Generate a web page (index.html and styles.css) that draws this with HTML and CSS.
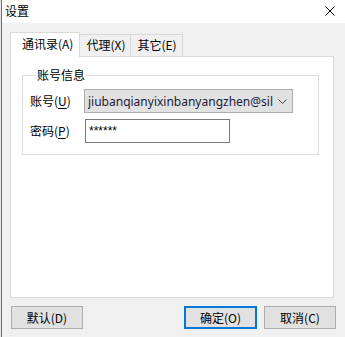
FILE: index.html
```html
<!DOCTYPE html>
<html lang="zh">
<head>
<meta charset="utf-8">
<title>设置</title>
<link rel="stylesheet" href="styles.css">
</head>
<body>
<div class="edge"></div>
<div class="window">
  <div class="titlebar">
    <span class="title">设置</span>
    <svg class="close" width="10" height="10" viewBox="0 0 10 10"><path d="M0.5 0.5L9.5 9.5M9.5 0.5L0.5 9.5" stroke="#000" stroke-width="1" fill="none"/></svg>
  </div>
  <div class="body">
    <div class="tabs">
      <div class="tab active">通讯录(<u>A</u>)</div>
      <div class="tab">代理(<u>X</u>)</div>
      <div class="tab">其它(<u>E</u>)</div>
    </div>
    <div class="panel">
      <fieldset class="group">
        <legend>账号信息</legend>
        <div class="row">
          <label class="lbl">账号(<u>U</u>)</label>
          <div class="combo">
            <span class="combo-text">jiubanqianyixinbanyangzhen@sil</span>
            <svg class="chev" width="9" height="5" viewBox="0 0 9 5"><path d="M0.5 0.5L4.5 4.5L8.5 0.5" stroke="#444" stroke-width="1" fill="none"/></svg>
          </div>
        </div>
        <div class="row">
          <label class="lbl">密码(<u>P</u>)</label>
          <div class="input">******</div>
        </div>
      </fieldset>
    </div>
    <div class="buttons">
      <button class="btn">默认(D)</button>
      <div class="spacer"></div>
      <button class="btn primary">确定(O)</button>
      <button class="btn">取消(C)</button>
    </div>
  </div>
</div>
</body>
</html>
```
FILE: styles.css
```css
html, body {
  margin: 0;
  padding: 0;
}
body {
  width: 345px;
  height: 337px;
  overflow: hidden;
  display: flex;
  background: #f0f0f0;
  font-family: "Noto Sans CJK SC", "Noto Sans", sans-serif;
  font-size: 12px;
  color: #000;
}
.edge {
  width: 1px;
  background: #e4e4e4;
}
.window {
  flex: 1;
  border-left: 1px solid #2f7fd6;
  display: flex;
  flex-direction: column;
}
.titlebar {
  height: 23px;
  background: #fff;
  display: flex;
  align-items: center;
  justify-content: space-between;
  padding: 0 10px 0 3px;
}
.title {
  font-size: 12px;
  line-height: 16px;
  margin-top: -1px;
}
.close {
  display: block;
  margin-top: -2px;
}
.body {
  padding: 9px 0 0 8px;
  display: flex;
  flex-direction: column;
}
.tabs {
  display: flex;
  align-items: flex-end;
  height: 24px;
  position: relative;
  z-index: 1;
}
.tab {
  height: 22px;
  box-sizing: border-box;
  border: 1px solid #d9d9d9;
  border-bottom: none;
  border-left: none;
  background: #f0f0f0;
  padding: 0 5px 0 6px;
  line-height: 20px;
  white-space: nowrap;
}
.tab u { text-decoration: none; }
.tab.active {
  height: 25px;
  margin-bottom: -1px;
  background: #fff;
  border-left: 1px solid #d9d9d9;
  padding: 0 6px 0 11px;
  line-height: 22px;
}
.panel {
  width: 324px;
  height: 242px;
  box-sizing: border-box;
  background: #fff;
  border: 1px solid #d9d9d9;
  padding: 10px 0 0 11px;
}
.group {
  margin: 0;
  width: 297px;
  box-sizing: border-box;
  border: 1px solid #dcdcdc;
  padding: 6px 0 11px 7px;
  min-width: 0;
  display: flex;
  flex-direction: column;
  gap: 6px;
}
.group legend {
  padding: 0 1px;
  margin-left: 6px;
  line-height: 16px;
}
.row {
  display: flex;
  align-items: center;
  height: 24px;
}
.lbl {
  width: 54px;
  line-height: 16px;
}
.lbl u { text-underline-offset: 2px; }
.combo {
  width: 209px;
  height: 24px;
  box-sizing: border-box;
  border: 1px solid #adadad;
  background: #e1e1e1;
  display: flex;
  align-items: center;
  padding-left: 3px;
  padding-right: 2px;
}
.combo-text {
  flex: 1;
  overflow: hidden;
  white-space: nowrap;
  font-family: "Noto Sans", "Noto Sans CJK SC", sans-serif;
  font-size: 12px;
  color: #1a1a3a;
}
.chev {
  margin: 1px 3px 0 2px;
}
.input {
  margin-left: 1px;
  width: 145px;
  height: 24px;
  box-sizing: border-box;
  border: 1px solid #7a7a7a;
  background: #fff;
  padding: 3px 3px 0;
  line-height: 16px;
  font-family: "Liberation Sans", sans-serif;
  font-size: 12px;
}
.buttons {
  display: flex;
  align-items: center;
  margin-top: 8px;
  padding-left: 1px;
  width: 325px;
  gap: 7px;
}
.spacer { flex: 1; }
.btn {
  width: 72px;
  height: 23px;
  box-sizing: border-box;
  border: 1px solid #adadad;
  background: #e1e1e1;
  font-family: "Noto Sans CJK SC", sans-serif;
  font-size: 12px;
  color: #000;
  padding: 0;
  margin: 0;
  line-height: 18px;
}
.btn.primary {
  width: 73px;
  border: 2px solid #0078d7;
}
```
